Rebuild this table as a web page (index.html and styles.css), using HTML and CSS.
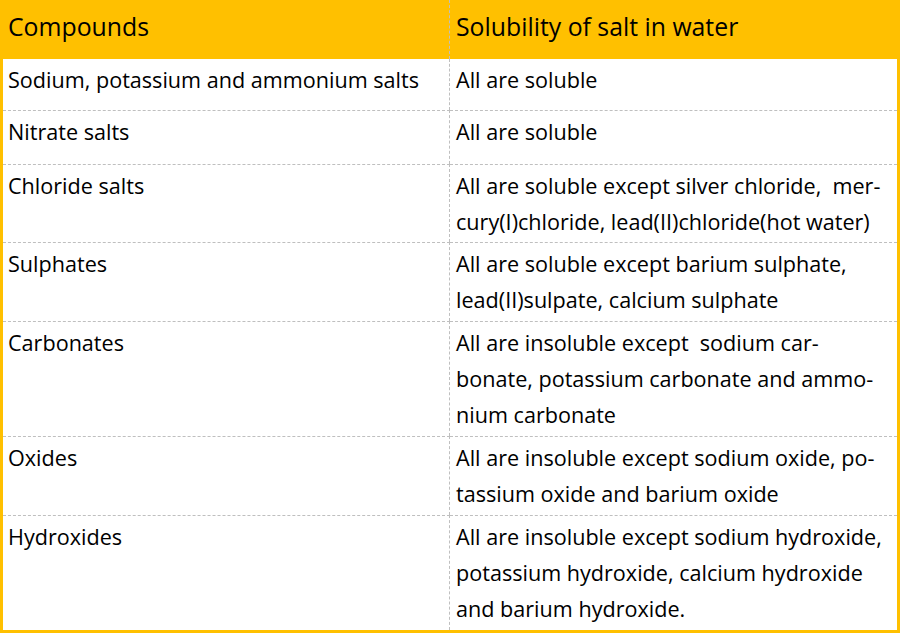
FILE: index.html
```html
<!DOCTYPE html>
<html lang="en">
<head>
<meta charset="utf-8">
<title>Solubility of salts</title>
<link rel="stylesheet" href="styles.css">
</head>
<body>
<div class="table">
  <div class="cell head left">Compounds</div>
  <div class="cell head right">Solubility of salt in water</div>

  <div class="cell left">Sodium, potassium and ammonium salts</div>
  <div class="cell right">All are soluble</div>

  <div class="cell left sep">Nitrate salts</div>
  <div class="cell right sep">All are soluble</div>

  <div class="cell left sep">Chloride salts</div>
  <div class="cell right sep">All are soluble except silver chloride,&nbsp; mer-<br>cury(I)chloride, lead(II)chloride(hot water)</div>

  <div class="cell left sep">Sulphates</div>
  <div class="cell right sep">All are soluble except barium sulphate,<br>lead(II)sulpate, calcium sulphate</div>

  <div class="cell left sep">Carbonates</div>
  <div class="cell right sep">All are insoluble except&nbsp; sodium car-<br>bonate, potassium carbonate and ammo-<br>nium carbonate</div>

  <div class="cell left sep">Oxides</div>
  <div class="cell right sep">All are insoluble except sodium oxide, po-<br>tassium oxide and barium oxide</div>

  <div class="cell left sep">Hydroxides</div>
  <div class="cell right sep">All are insoluble except sodium hydroxide,<br>potassium hydroxide, calcium hydroxide<br>and barium hydroxide.</div>
</div>
</body>
</html>
```
FILE: styles.css
```css
html, body {
  margin: 0;
  padding: 0;
  background: #ffffff;
}

.table {
  width: 900px;
  height: 633px;
  box-sizing: border-box;
  border-left: 3px solid #ffc000;
  border-right: 3px solid #ffc000;
  border-bottom: 3px solid #ffc000;
  display: grid;
  grid-template-columns: 447px 447px;
  grid-template-rows: 59px 51px 54px 78px 79px 115px 79px 115px;
  font-family: "Open Sans", Lato, sans-serif;
  color: #000000;
}

.cell {
  box-sizing: border-box;
  white-space: nowrap;
  font-size: 21.6px;
  line-height: 36px;
  padding-top: 3px;
  overflow: hidden;
}

.left {
  border-right: 1px dashed #bfbfbf;
  padding-left: 5px;
}

.right {
  padding-left: 6px;
}

.sep {
  border-top: 1px dashed #bfbfbf;
}

.head {
  background: #ffc000;
  font-size: 24.8px;
  line-height: 31px;
  padding-top: 11px;
}
```
